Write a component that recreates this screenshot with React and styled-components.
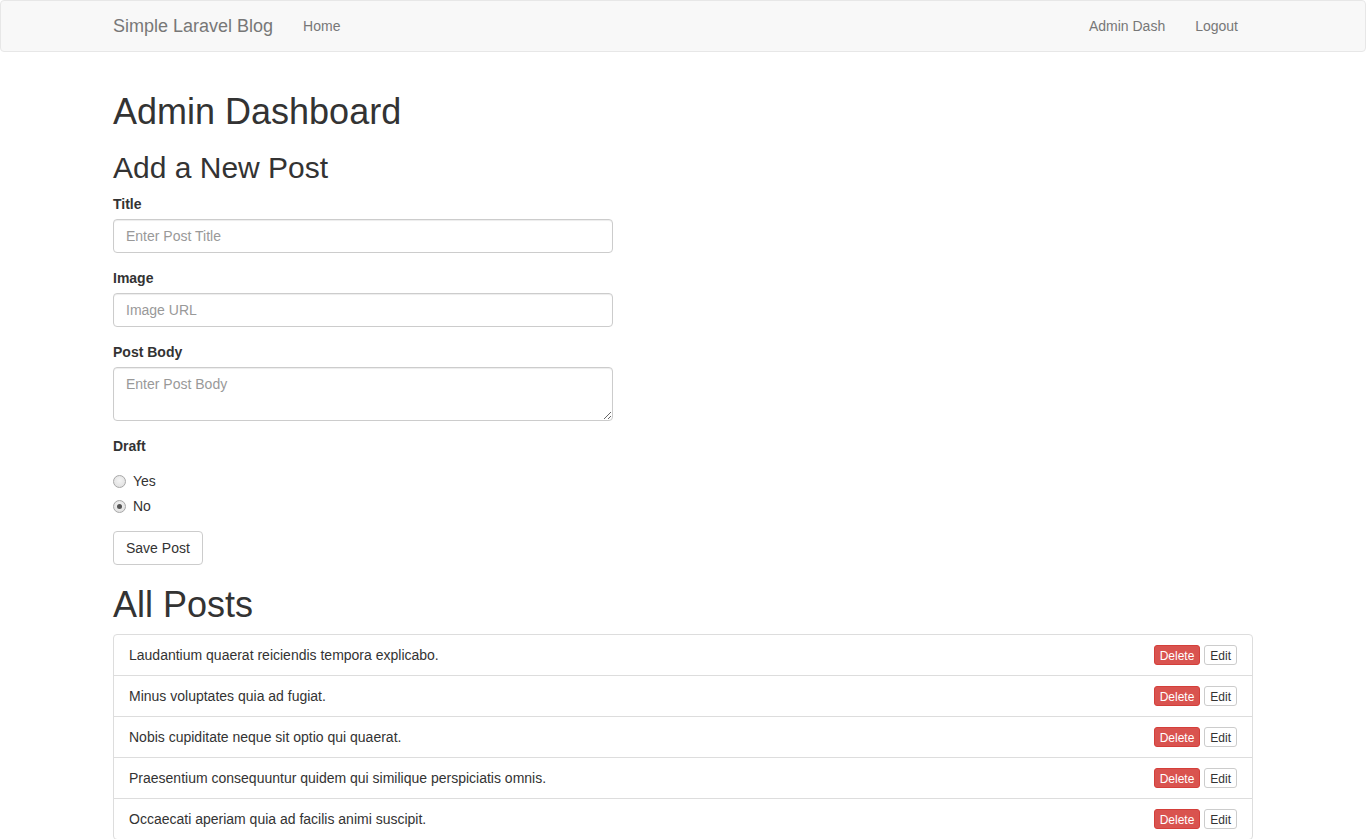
import React from "react";
import styled, { createGlobalStyle } from "styled-components";

const Global = createGlobalStyle`
  * { box-sizing: border-box; }
  html, body { margin: 0; padding: 0; }
  body {
    font-family: "Liberation Sans", Arial, Helvetica, sans-serif;
    font-size: 14px;
    line-height: 1.42857143;
    color: #333;
    background: #fff;
  }
`;

const Navbar = styled.nav`
  min-height: 50px;
  background: #f8f8f8;
  border: 1px solid #e7e7e7;
  border-radius: 4px;
  margin-bottom: 20px;
`;

const Container = styled.div`
  display: flow-root;
  width: 1170px;
  margin: 0 auto;
  padding: 0 15px;
`;

const NavInner = styled(Container)`
  display: flex;
  justify-content: space-between;
  align-items: stretch;
`;

const NavGroup = styled.div`
  display: flex;
  margin-left: ${(p) => (p.$left ? "-15px" : "0")};
`;

const Brand = styled.a`
  display: block;
  height: 50px;
  padding: 15px;
  font-size: 18px;
  line-height: 20px;
  color: #777;
  text-decoration: none;
`;

const NavLink = styled.a`
  display: block;
  padding: 15px;
  line-height: 20px;
  color: #777;
  text-decoration: none;
`;

const H1 = styled.h1`
  font-size: 36px;
  font-weight: 500;
  line-height: 39px;
  margin: 20px 0 10px;
`;

const H2 = styled.h2`
  font-size: 30px;
  font-weight: 500;
  line-height: 33px;
  margin: 20px 0 10px;
`;

const Form = styled.form`
  width: 500px;
`;

const FormGroup = styled.div`
  margin-bottom: 15px;
`;

const Label = styled.label`
  display: inline-block;
  max-width: 100%;
  margin-bottom: 5px;
  font-weight: 700;
`;

const inputStyles = `
  display: block;
  width: 100%;
  padding: 6px 12px;
  font-family: inherit;
  font-size: 14px;
  line-height: 1.42857143;
  color: #555;
  background: #fff;
  border: 1px solid #ccc;
  border-radius: 4px;
  box-shadow: inset 0 1px 1px rgba(0,0,0,.075);
  outline: none;
  &::placeholder { color: #999; }
`;

const Input = styled.input`
  ${inputStyles}
  height: 34px;
`;

const TextArea = styled.textarea`
  ${inputStyles}
  height: 54px;
  resize: vertical;
`;

const RadioRow = styled.div`
  margin: ${(p) => (p.$first ? "10px 0 10px" : "-5px 0 10px")};
`;

const RadioLabel = styled.label`
  display: flex;
  align-items: center;
  min-height: 20px;
  cursor: pointer;
`;

const RadioInput = styled.input`
  appearance: none;
  -webkit-appearance: none;
  width: 13px;
  height: 13px;
  margin: 0 7px 0 0;
  border-radius: 50%;
  border: 1px solid #a8a8a8;
  background: radial-gradient(circle at 50% 40%, #f4f4f4 0%, #dcdcdc 100%);
  position: relative;
  &:checked::after {
    content: "";
    position: absolute;
    left: 3px;
    top: 3px;
    width: 5px;
    height: 5px;
    border-radius: 50%;
    background: #555;
  }
`;

const Button = styled.button`
  display: inline-block;
  font-family: inherit;
  font-size: ${(p) => (p.$xs ? "12px" : "14px")};
  line-height: ${(p) => (p.$xs ? "18px" : "20px")};
  padding: ${(p) => (p.$xs ? "1px 5px" : "6px 12px")};
  border-radius: ${(p) => (p.$xs ? "3px" : "4px")};
  border: 1px solid ${(p) => (p.$danger ? "#d43f3a" : "#ccc")};
  background: ${(p) => (p.$danger ? "#d9534f" : "#fff")};
  color: ${(p) => (p.$danger ? "#fff" : "#333")};
  cursor: pointer;
`;

const ListGroup = styled.ul`
  list-style: none;
  margin: 0 0 20px;
  padding: 0;
`;

const ListItem = styled.li`
  display: flex;
  justify-content: space-between;
  align-items: flex-start;
  padding: 10px 15px;
  margin-bottom: -1px;
  border: 1px solid #ddd;
  background: #fff;
  &:first-child {
    border-top-left-radius: 4px;
    border-top-right-radius: 4px;
  }
  &:last-child {
    border-bottom-left-radius: 4px;
    border-bottom-right-radius: 4px;
  }
`;

const ItemTitle = styled.span`
  line-height: 20px;
`;

const Actions = styled.div`
  display: flex;
  gap: 4px;
  height: 20px;
  overflow: visible;
`;

const posts = [
  "Laudantium quaerat reiciendis tempora explicabo.",
  "Minus voluptates quia ad fugiat.",
  "Nobis cupiditate neque sit optio qui quaerat.",
  "Praesentium consequuntur quidem qui similique perspiciatis omnis.",
  "Occaecati aperiam quia ad facilis animi suscipit.",
];

export default function App() {
  return (
    <>
      <Global />
      <Navbar>
        <NavInner>
          <NavGroup $left>
            <Brand href="#">Simple Laravel Blog</Brand>
            <NavLink href="#">Home</NavLink>
          </NavGroup>
          <NavGroup>
            <NavLink href="#">Admin Dash</NavLink>
            <NavLink href="#">Logout</NavLink>
          </NavGroup>
        </NavInner>
      </Navbar>
      <Container>
        <H1>Admin Dashboard</H1>
        <H2>Add a New Post</H2>
        <Form onSubmit={(e) => e.preventDefault()}>
          <FormGroup>
            <Label>Title</Label>
            <Input placeholder="Enter Post Title" />
          </FormGroup>
          <FormGroup>
            <Label>Image</Label>
            <Input placeholder="Image URL" />
          </FormGroup>
          <FormGroup>
            <Label>Post Body</Label>
            <TextArea placeholder="Enter Post Body" />
          </FormGroup>
          <FormGroup>
            <Label>Draft</Label>
            <RadioRow $first>
              <RadioLabel>
                <RadioInput type="radio" name="draft" />
                Yes
              </RadioLabel>
            </RadioRow>
            <RadioRow>
              <RadioLabel>
                <RadioInput type="radio" name="draft" defaultChecked />
                No
              </RadioLabel>
            </RadioRow>
          </FormGroup>
          <Button type="submit">Save Post</Button>
        </Form>
        <H1>All Posts</H1>
        <ListGroup>
          {posts.map((p) => (
            <ListItem key={p}>
              <ItemTitle>{p}</ItemTitle>
              <Actions>
                <Button $xs $danger>Delete</Button>
                <Button $xs>Edit</Button>
              </Actions>
            </ListItem>
          ))}
        </ListGroup>
      </Container>
    </>
  );
}
